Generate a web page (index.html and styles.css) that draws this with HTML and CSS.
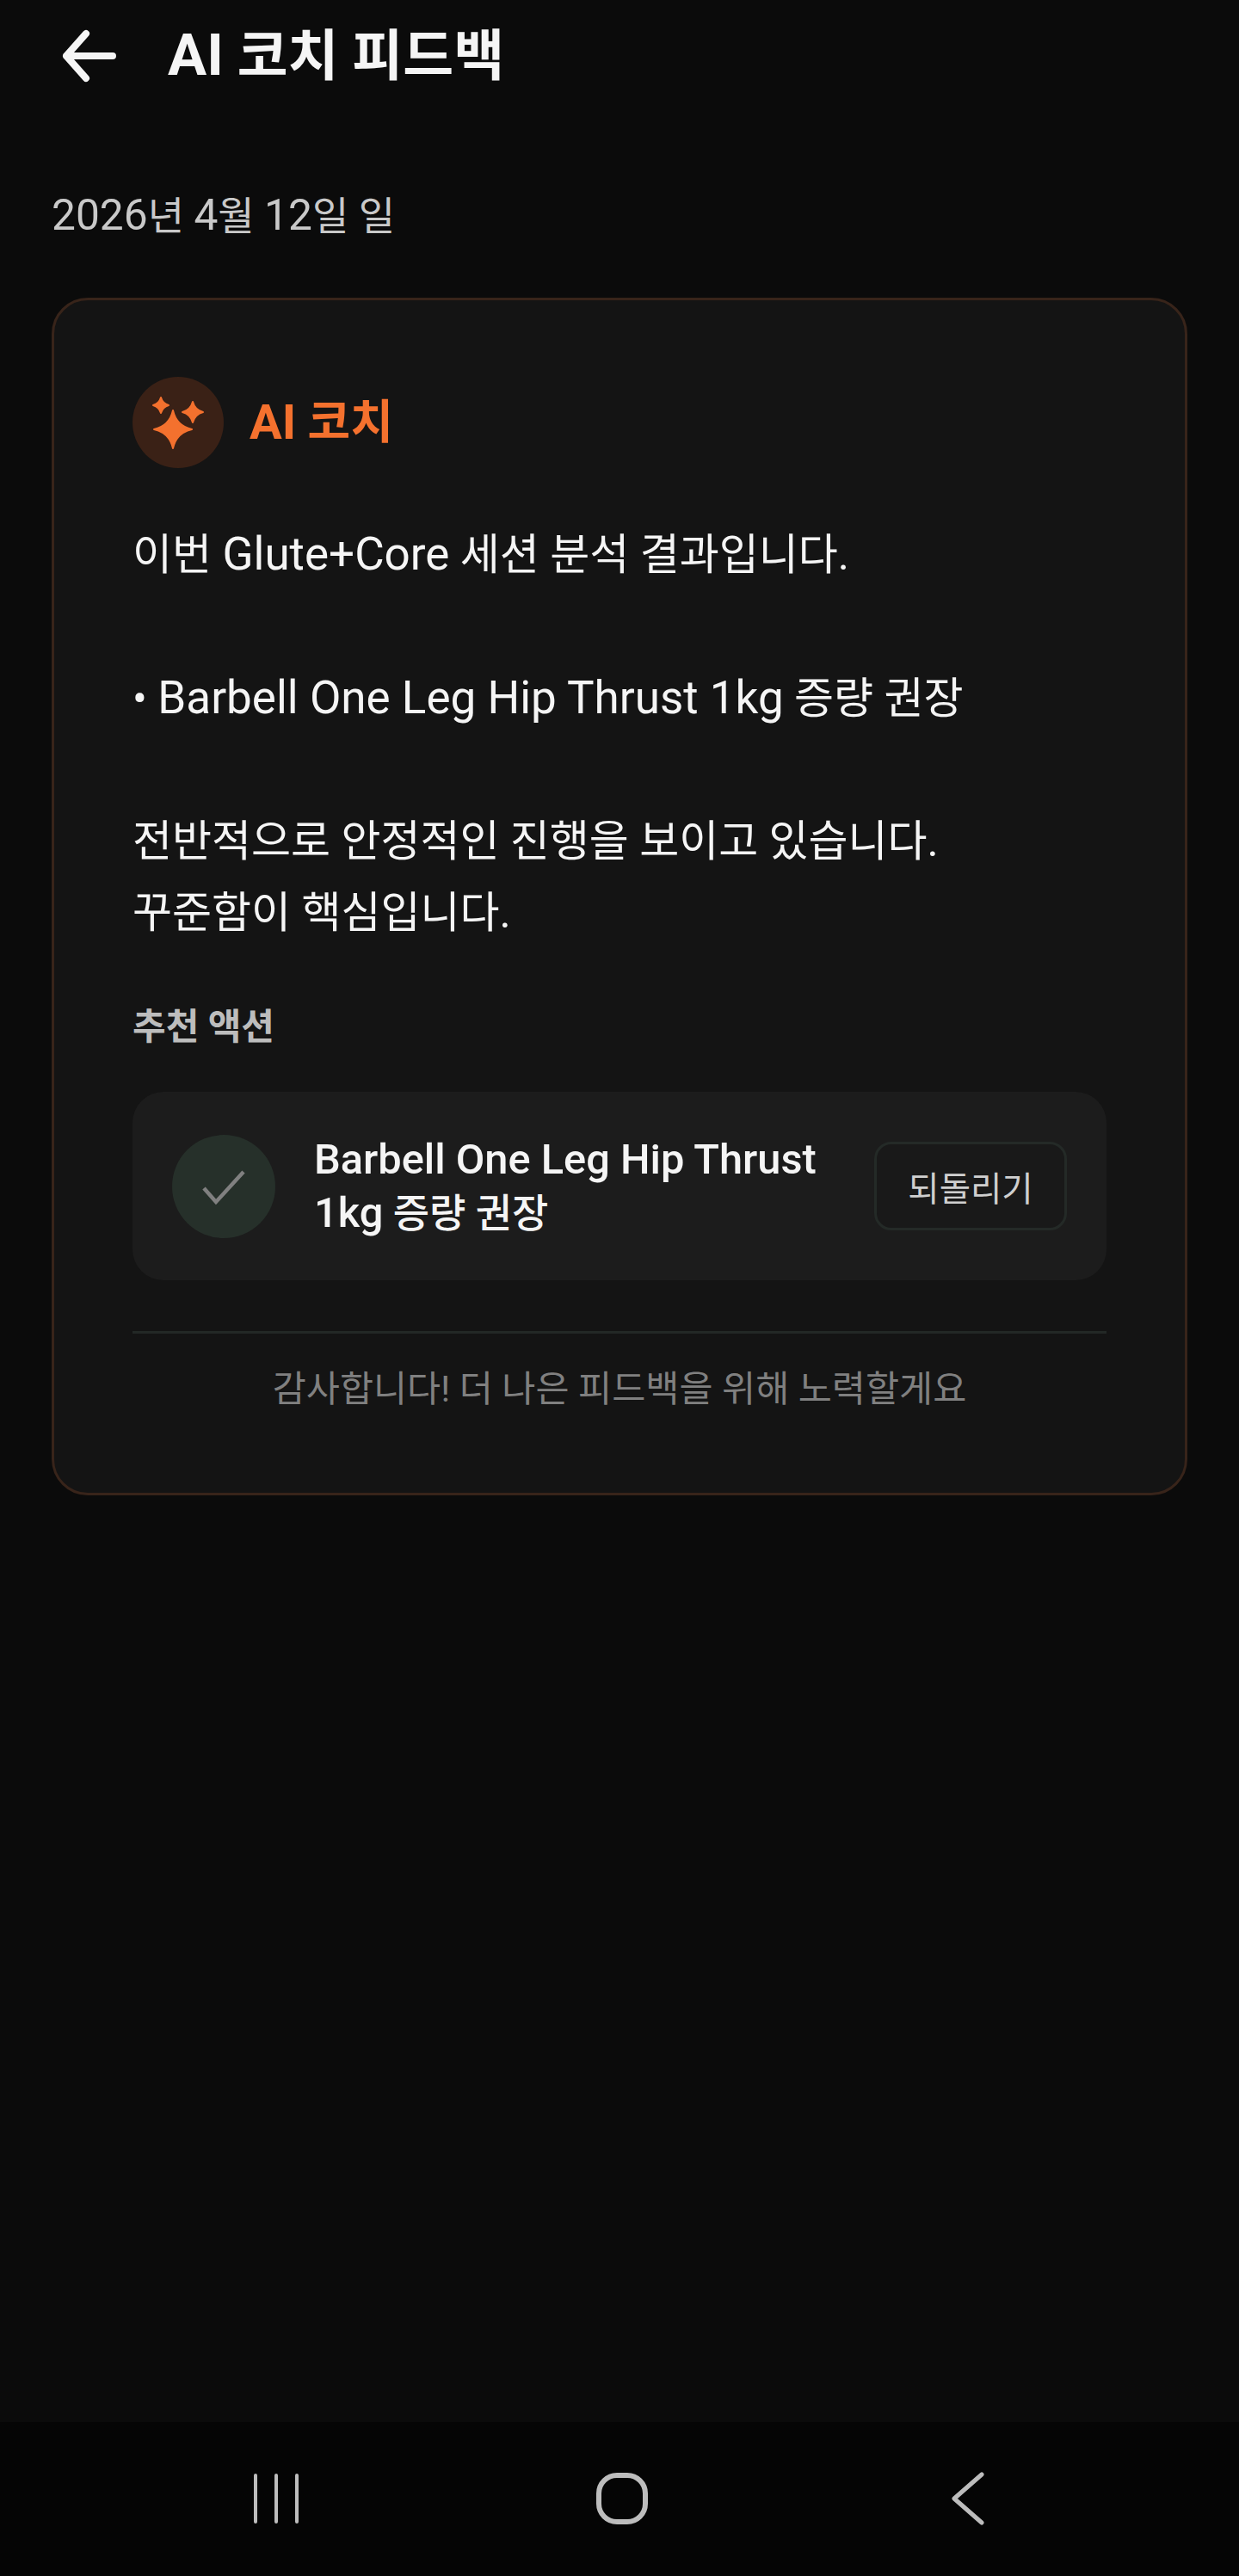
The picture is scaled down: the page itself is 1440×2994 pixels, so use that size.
FILE: index.html
```html
<!DOCTYPE html>
<html lang="ko">
<head>
    <meta charset="UTF-8">
    <meta name="viewport" content="width=device-width, initial-scale=1.0">
    <title>AI 코치 피드백</title>
    <link rel="stylesheet" href="styles.css">
</head>
<body>
    <div class="screen">
        <header class="top-bar">
            <svg class="back-icon" width="66" height="64" viewBox="0 0 66 64" fill="none">
                <path d="M61 32H7M30 6L7 32L30 58" stroke="#f5f5f5" stroke-width="8" stroke-linecap="round" stroke-linejoin="round"/>
            </svg>
            <h1><span class="en">AI</span> 코치 피드백</h1>
        </header>

        <main class="content">
            <p class="date"><span class="en">2026</span>년 <span class="en">4</span>월 <span class="en">12</span>일 일</p>

            <section class="card">
                <div class="card-head">
                    <div class="spark-icon">
                        <svg width="106" height="106" viewBox="0 0 106 106" fill="#f4712e" stroke="#f4712e" stroke-width="2" stroke-linejoin="round">
                            <path d="M47 39Q51 57 69 61Q51 65 47 83Q43 65 25 61Q43 57 47 39Z"/>
                            <path d="M33 24Q35 31 42 33Q35 35 33 42Q31 35 24 33Q31 31 33 24Z"/>
                            <path d="M70 29Q72.500 38.500 82 41Q72.500 43.500 70 53Q67.500 43.500 58 41Q67.500 38.500 70 29Z"/>
                        </svg>
                    </div>
                    <span class="coach-name"><span class="en">AI</span> 코치</span>
                </div>

                <div class="message">
                    <p>이번 <span class="en">Glute+Core</span> 세션 분석 결과입니다.</p>
                    <p>• <span class="en">Barbell One Leg Hip Thrust 1kg</span> 증량 권장</p>
                    <p>전반적으로 안정적인 진행을 보이고 있습니다.<br>꾸준함이 핵심입니다.</p>
                </div>

                <h2 class="section-label">추천 액션</h2>

                <div class="action-row">
                    <div class="check-icon">
                        <svg width="120" height="120" viewBox="0 0 120 120" fill="none">
                            <path d="M37 62L51 78L83 43" stroke="#808080" stroke-width="4.500"/>
                        </svg>
                    </div>
                    <div class="action-text"><span class="en">Barbell One Leg Hip Thrust<br>1kg</span> 증량 권장</div>
                    <button class="undo-btn">되돌리기</button>
                </div>

                <p class="thanks">감사합니다! 더 나은 피드백을 위해 노력할게요</p>
            </section>
        </main>

        <nav class="nav-bar">
            <svg width="54" height="60" viewBox="0 0 54 60" fill="none" stroke="#bdbdbd" stroke-width="4" stroke-linecap="round">
                <path d="M3 3V57M27 3V57M51 3V57"/>
            </svg>
            <svg width="60" height="60" viewBox="0 0 60 60" fill="none" stroke="#bdbdbd" stroke-width="6">
                <rect x="3" y="3" width="54" height="54" rx="21"/>
            </svg>
            <svg width="38" height="62" viewBox="0 0 38 62" fill="none" stroke="#bdbdbd" stroke-width="5" stroke-linecap="round" stroke-linejoin="round">
                <path d="M35 3L3 31L35 59"/>
            </svg>
        </nav>
    </div>
</body>
</html>
```

FILE: styles.css
```css
* {
    margin: 0;
    padding: 0;
    box-sizing: border-box;
}

body {
    font-family: 'Roboto', 'Noto Sans CJK KR', sans-serif;
    background: #0b0b0b;
    color: #f5f5f5;
}

.en {
    font-size: 1.08em;
}

.screen {
    height: 2994px;
    display: flex;
    flex-direction: column;
    overflow: hidden;
}

.top-bar {
    height: 130px;
    display: flex;
    align-items: center;
    gap: 59px;
    padding-left: 70px;
}

.top-bar h1 {
    font-size: 64px;
    font-weight: 700;
    line-height: 1;
}

.top-bar h1 .en {
    font-size: 1.05em;
}

.content {
    flex: 1;
    padding: 0 60px;
}

.date {
    margin-top: 90px;
    font-size: 46px;
    line-height: 60px;
    color: #c9c9c9;
}

.card {
    margin-top: 65px;
    height: 1392px;
    padding: 89px 91px 0;
    background: #141414;
    border: 3px solid #38241a;
    border-radius: 42px;
}

.card-head {
    display: flex;
    align-items: center;
    gap: 30px;
}

.spark-icon {
    width: 106px;
    height: 106px;
    border-radius: 50%;
    background: #3a2116;
}

.spark-icon svg,
.check-icon svg {
    display: block;
}

.coach-name {
    font-size: 54px;
    font-weight: 700;
    line-height: 1;
    color: #f4712e;
}

.coach-name .en {
    font-size: 1.04em;
}

.message {
    margin-top: 59px;
    font-size: 50px;
    line-height: 83px;
}

.message .en {
    font-size: 1.06em;
}

.message p + p {
    margin-top: 83px;
}

.section-label {
    margin-top: 61px;
    font-size: 42px;
    font-weight: 700;
    line-height: 60px;
    color: #bdbdbd;
}

.action-row {
    margin-top: 45px;
    height: 219px;
    padding: 0 46px;
    display: flex;
    align-items: center;
    background: #1c1c1c;
    border-radius: 36px;
}

.check-icon {
    width: 120px;
    height: 120px;
    flex-shrink: 0;
    border-radius: 50%;
    background: #26302a;
}

.action-text {
    flex: 1;
    margin-left: 45px;
    font-size: 46px;
    font-weight: 500;
    line-height: 61px;
}

.action-text .en {
    font-size: 1.06em;
}

.undo-btn {
    width: 224px;
    height: 103px;
    font-family: inherit;
    font-size: 39.500px;
    color: #cfcfcf;
    background: #191919;
    border: 3px solid #242a27;
    border-radius: 20px;
}

.thanks {
    margin-top: 59px;
    padding-top: 34px;
    border-top: 3px solid #232826;
    font-size: 42.500px;
    line-height: 62px;
    text-align: center;
    color: #808080;
}

.nav-bar {
    height: 179px;
    display: grid;
    grid-template-columns: 1fr 1fr 1fr;
    justify-items: center;
    align-items: center;
    padding: 0 114px 2px 120px;
    background: #050505;
}
```
